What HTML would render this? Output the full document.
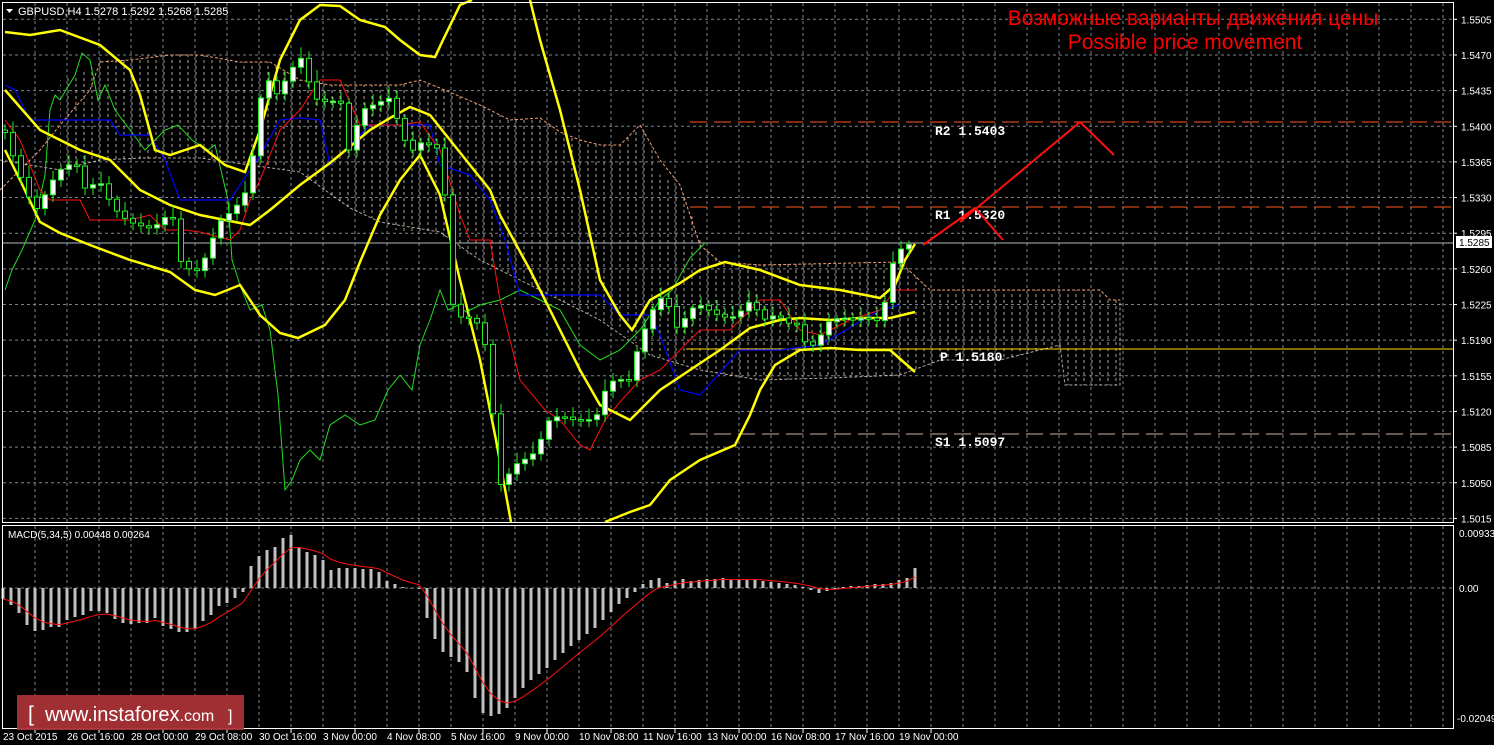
<!DOCTYPE html>
<html><head><meta charset="utf-8"><style>
html,body{margin:0;padding:0;background:#000;width:1494px;height:745px;overflow:hidden}
svg{display:block}
.sans{font-family:"Liberation Sans","DejaVu Sans",sans-serif}
.mono{font-family:"Liberation Mono","DejaVu Sans Mono",monospace}
</style></head><body>
<svg id="s" width="1494" height="745" xmlns="http://www.w3.org/2000/svg" class="sans">
<defs>
<pattern id="hatch" width="8" height="6" patternUnits="userSpaceOnUse">
<line x1="4" y1="0" x2="4" y2="3" stroke="#e0d4c8" stroke-width="1" opacity="0.75"/>
</pattern>
</defs>
<rect width="1494" height="745" fill="#000"/>
<g id="grid"></g>
<polygon points="60,80 90,70 100,60 150,55 200,55 240,62 270,62 300,80 330,85 360,85 400,85 420,80 440,88 480,105 500,115 520,120 540,118 560,132 580,140 600,145 620,145 640,125 650,140 660,175 680,185 690,210 700,240 720,262 900,262 930,290 1100,290 1105,300 1120,300 1120,385 1065,385 1060,345 1000,360 940,360 900,375 830,378 760,380 700,370 650,355 620,330 600,320 560,300 520,280 480,260 450,245 440,232 400,232 380,222 350,208 330,195 300,172 280,168 250,165 230,160 200,158 170,156 140,160 100,160 80,165 60,170" fill="url(#hatch)"/>
<polyline fill="none" stroke="#f0a070" stroke-width="1" stroke-dasharray="3,2" points="0,190 20,170 40,150 60,125 90,90 100,62 130,60 170,55 200,55 240,62 270,62 300,80 330,85 360,85 400,85 420,80 440,88 480,105 510,120 540,118 560,132 580,140 600,145 620,145 640,125 660,160 680,185 690,215 700,245 720,262 760,265 900,262 930,290 1100,290 1110,300 1120,300"/>
<polyline fill="none" stroke="#e0d0c0" stroke-width="1" stroke-dasharray="3,2" opacity="0.8" points="0,160 60,170 100,160 140,158 200,158 250,165 300,172 350,208 380,222 440,232 480,260 520,280 560,300 600,320 650,355 700,370 760,380 830,378 900,375 940,360 1000,360 1060,345 1065,385 1120,385 1120,300"/>
<line x1="690" y1="122" x2="1453" y2="122" stroke="#ff5a1e" stroke-dasharray="17,7"/>
<line x1="690" y1="207" x2="1453" y2="207" stroke="#ff5a1e" stroke-dasharray="17,7"/>
<line x1="690" y1="434" x2="1453" y2="434" stroke="#d8a8a0" stroke-dasharray="17,7"/>
<line x1="686" y1="349" x2="1453" y2="349" stroke="#ffd700" stroke-width="1"/>
<line x1="2" y1="243" x2="1453" y2="243" stroke="#b0b8c0" stroke-width="1"/>
<g class="mono" font-size="13" fill="#fff" font-weight="bold">
<text x="935" y="135">R2 1.5403</text>
<text x="935" y="219">R1 1.5320</text>
<text x="940" y="361">P 1.5180</text>
<text x="935" y="446">S1 1.5097</text>
</g>
<g id="lines"></g>
<g id="candles"></g>
<g id="macd"></g>
<polyline fill="none" stroke="#ff1010" stroke-width="2" points="923,245 975,208 1003,240"/>
<polyline fill="none" stroke="#ff1010" stroke-width="2" points="960,222 1080,122 1114,155"/>
<rect x="2.5" y="2.5" width="1451" height="520" fill="none" stroke="#fff" stroke-width="1"/>
<rect x="2.5" y="525.5" width="1451" height="203" fill="none" stroke="#fff" stroke-width="1"/>
<polygon points="6,9 13,9 9.5,13" fill="#fff"/>
<text x="18" y="15" font-size="11" fill="#fff">GBPUSD,H4  1.5278 1.5292 1.5268 1.5285</text>
<text x="8" y="538" font-size="10" fill="#fff">MACD(5,34,5) 0.00448 0.00264</text>
<text x="1193" y="25" font-size="21" fill="#ff0000" text-anchor="middle">Возможные варианты движения цены</text>
<text x="1185" y="49" font-size="21" fill="#ff0000" text-anchor="middle">Possible price movement</text>
<g id="axis" font-size="10" fill="#fff"></g>
<rect x="1456" y="236" width="36" height="12" fill="#fff"/>
<text x="1459" y="246" font-size="10" fill="#000">1.5285</text>
<text x="1459" y="537" font-size="10" fill="#fff">0.00933</text>
<text x="1459" y="592" font-size="10" fill="#fff">0.00</text>
<text x="1457" y="722" font-size="10" fill="#fff">-0.02049</text>
<g id="time" font-size="10" fill="#fff"></g>
<rect x="17" y="695" width="227" height="35" fill="#a83235" opacity="0.95"/>
<text x="28" y="721" font-size="21" fill="#fff">[</text>
<text x="45" y="721" font-size="20" fill="#fff">www.instaforex<tspan font-size="16">.com</tspan></text>
<text x="228" y="721" font-size="16" fill="#fff">]</text>
</svg>
<script>
(function(){
var NS="http://www.w3.org/2000/svg";
function el(p,t,a){var e=document.createElementNS(NS,t);for(var k in a)e.setAttribute(k,a[k]);p.appendChild(e);return e;}
var g=document.getElementById('grid');
for(var x=35;x<1453;x+=32){el(g,'line',{x1:x,y1:3,x2:x,y2:522,stroke:'#7a8290','stroke-dasharray':'3,3'});el(g,'line',{x1:x,y1:526,x2:x,y2:728,stroke:'#7a8290','stroke-dasharray':'3,3'});}
var labs=['1.5505','1.5470','1.5435','1.5400','1.5365','1.5330','1.5295','1.5260','1.5225','1.5190','1.5155','1.5120','1.5085','1.5050','1.5015'];
var ax=document.getElementById('axis');
for(var k=0;k<15;k++){var y=19.3+35.65*k;el(g,'line',{x1:3,y1:y,x2:1453,y2:y,stroke:'#7a8290','stroke-dasharray':'3,3'});el(ax,'line',{x1:1453,y1:y,x2:1457,y2:y,stroke:'#fff'});var t=el(ax,'text',{x:1461,y:y+4});t.textContent=labs[k];}
el(g,'line',{x1:3,y1:588,x2:1453,y2:588,stroke:'#7a8290','stroke-dasharray':'3,3'});
var tl=['23 Oct 2015','26 Oct 16:00','28 Oct 00:00','29 Oct 08:00','30 Oct 16:00','3 Nov 00:00','4 Nov 08:00','5 Nov 16:00','9 Nov 00:00','10 Nov 08:00','11 Nov 16:00','13 Nov 00:00','16 Nov 08:00','17 Nov 16:00','19 Nov 00:00'];
var tg=document.getElementById('time');
for(var i=0;i<tl.length;i++){var tx=(i==0?3:67+64*(i-1));var t2=el(tg,'text',{x:tx,y:740});t2.textContent=tl[i];el(tg,'line',{x1:35+64*i,y1:729,x2:35+64*i,y2:733,stroke:'#fff'});}
function interp(pts,x){for(var i=0;i<pts.length-1;i++){if(x>=pts[i][0]&&x<=pts[i+1][0]){var f=(x-pts[i][0])/(pts[i+1][0]-pts[i][0]);return pts[i][1]+f*(pts[i+1][1]-pts[i][1]);}}return pts[x<pts[0][0]?0:pts.length-1][1];}
function pl(pts,c,w){el(document.getElementById('lines'),'polyline',{points:pts.map(function(p){return p.join(',')}).join(' '),fill:'none',stroke:c,'stroke-width':w});}
pl([[5,290],[12,270],[22,250],[35,220],[45,175],[50,110],[55,95],[60,100],[75,75],[82,53],[90,60],[98,100],[105,85],[115,110],[130,130],[145,150],[155,140],[165,130],[178,125],[192,140],[208,150],[215,145],[228,200],[232,260],[240,285],[250,310],[262,305],[270,330],[278,395],[285,490],[292,480],[300,460],[310,450],[320,460],[330,425],[345,415],[360,425],[375,420],[388,390],[400,375],[412,390],[420,345],[430,320],[440,290],[448,310],[458,305],[466,312],[480,305],[500,300],[520,290],[540,300],[560,310],[580,345],[600,360],[620,350],[640,330],[660,300],[672,290],[690,258],[705,243]],'#22dd22',1);
pl([[5,85],[15,90],[30,120],[50,120],[110,120],[120,135],[150,135],[165,160],[180,200],[230,200],[250,170],[260,155],[280,120],[300,118],[320,120],[330,165],[370,125],[400,125],[430,125],[440,165],[470,175],[490,200],[505,240],[520,295],[600,295],[620,315],[650,315],[660,335],[680,390],[700,395],[740,350],[780,350],[820,345],[880,310],[900,305]],'#0000ff',1.2);
pl([[5,120],[20,140],[30,165],[40,190],[50,200],[80,200],[90,220],[110,220],[130,220],[150,215],[165,230],[185,230],[200,232],[230,240],[240,230],[250,200],[260,180],[280,130],[300,110],[320,80],[340,80],[360,125],[380,125],[400,125],[420,122],[440,150],[460,215],[470,240],[490,240],[500,300],[520,380],[545,410],[560,420],[580,445],[590,450],[605,420],[620,402],[640,380],[660,370],[680,350],[700,330],[730,330],[760,300],[780,300],[800,330],[820,335],[850,320],[880,310],[895,290],[915,290]],'#ff1010',1);
var up=[[5,32],[30,35],[60,30],[100,45],[130,70],[140,95],[155,150],[170,155],[200,145],[225,165],[245,172],[260,130],[280,60],[300,20],[320,5],[340,6],[360,20],[385,27],[400,40],[420,55],[435,57],[443,40],[460,5],[472,0]];
var up2=[[530,0],[540,40],[560,110],[580,190],[600,280],[620,315],[632,330],[650,300],[680,283],[700,270],[725,262],[760,270],[800,285],[840,290],[880,298],[895,285],[905,260],[915,244]];
var mid=[[5,90],[40,130],[80,150],[110,160],[140,190],[170,205],[200,215],[225,220],[250,225],[270,210],[300,185],[330,163],[370,130],[390,118],[410,107],[430,115],[450,140],[470,165],[490,190],[500,215],[530,270],[560,330],[580,370],[600,405],[630,420],[660,390],[690,370],[720,350],[750,328],[780,320],[800,318],[830,320],[860,318],[890,318],[915,312]];
var lo=[[5,150],[20,180],[40,222],[60,233],[90,245],[130,260],[170,272],[195,290],[215,295],[240,285],[260,315],[280,333],[298,338],[325,325],[345,300],[360,262],[380,215],[400,180],[420,155],[440,195],[460,280],[480,360],[496,440],[511,522]];
var lo2=[[605,522],[630,512],[650,505],[670,480],[700,460],[735,445],[750,415],[760,390],[775,365],[800,350],[830,348],[860,350],[890,350],[915,372]];
[up,up2,mid,lo,lo2].forEach(function(p){pl(p,'#ffff00',2.5);});
var cl=[[5,130],[15,160],[28,195],[38,210],[50,185],[62,170],[75,165],[85,185],[100,180],[110,200],[120,215],[135,225],[150,230],[162,225],[172,210],[180,258],[190,268],[200,270],[210,245],[220,222],[235,210],[250,188],[258,110],[266,70],[275,95],[285,80],[300,55],[306,75],[316,100],[330,105],[340,100],[348,150],[362,108],[378,102],[390,98],[400,128],[410,155],[420,145],[430,148],[437,145],[444,160],[448,290],[458,315],[470,318],[480,325],[485,345],[492,400],[498,490],[506,480],[516,468],[526,455],[536,450],[548,420],[560,415],[572,420],[586,422],[596,420],[610,380],[618,375],[628,382],[640,340],[655,305],[665,295],[676,330],[686,320],[700,302],[716,312],[730,318],[740,312],[752,300],[762,322],[772,318],[784,322],[795,318],[805,340],[815,345],[828,322],[842,318],[852,322],[862,320],[875,322],[885,300],[895,252],[905,245],[912,243]];
var cg=document.getElementById('candles');var prev=interp(cl,-3);
for(var x2=5;x2<=913;x2+=8){var c=interp(cl,x2)+((x2*37)%11-5)*0.6;var o=prev;prev=c;var bt=Math.min(o,c),bb=Math.max(o,c);var h=Math.max(bb-bt,1.5);
var wt=bt-4-((x2*13)%9),wb=bb+4+((x2*7)%8);
el(cg,'line',{x1:x2,y1:wt,x2:x2,y2:wb,stroke:'#22ee22','stroke-width':1});
el(cg,'rect',{x:x2-2.5,y:bt,width:5,height:h,fill:(c<o?'#fff':'#000'),stroke:'#22ee22','stroke-width':1});}
var hv=[11,17,25,37,43,42,39,39,32,29,27,23,23,25,31,35,36,35,35,30,38,41,44,44,41,33,27,18,15,10,4,-22,-32,-38,-41,-50,-53,-41,-36,-33,-28,-18,-20,-20,-20,-19,-19,-16,-7,-4,-1,0,1,30,51,64,69,74,84,110,125,128,126,120,110,100,92,86,80,72,65,58,52,46,40,32,24,16,10,4,-4,-8,-10,-5,-7,-9,-7,-8,-9,-9,-10,-8,-9,-8,-9,-7,-6,-5,-4,-3,-1,2,5,3,1,-1,-2,-2,-3,-4,-4,-5,-8,-10,-20,-26,-30];
var mg=document.getElementById('macd');var sig=[];var s=hv[0];
for(var i2=0;i2<hv.length;i2++){var xx=3+8*i2;if(xx>915)break;var v=hv[i2];el(mg,'rect',{x:xx-1.5,y:v<0?588+v:588,width:3,height:Math.max(Math.abs(v),0.5),fill:'#c0c0c0'});s=s+(v-s)*0.33;sig.push([xx,588+s]);}
el(mg,'polyline',{points:sig.map(function(p){return p.join(',')}).join(' '),fill:'none',stroke:'#ff1010','stroke-width':1});
})();
</script>
</body></html>
